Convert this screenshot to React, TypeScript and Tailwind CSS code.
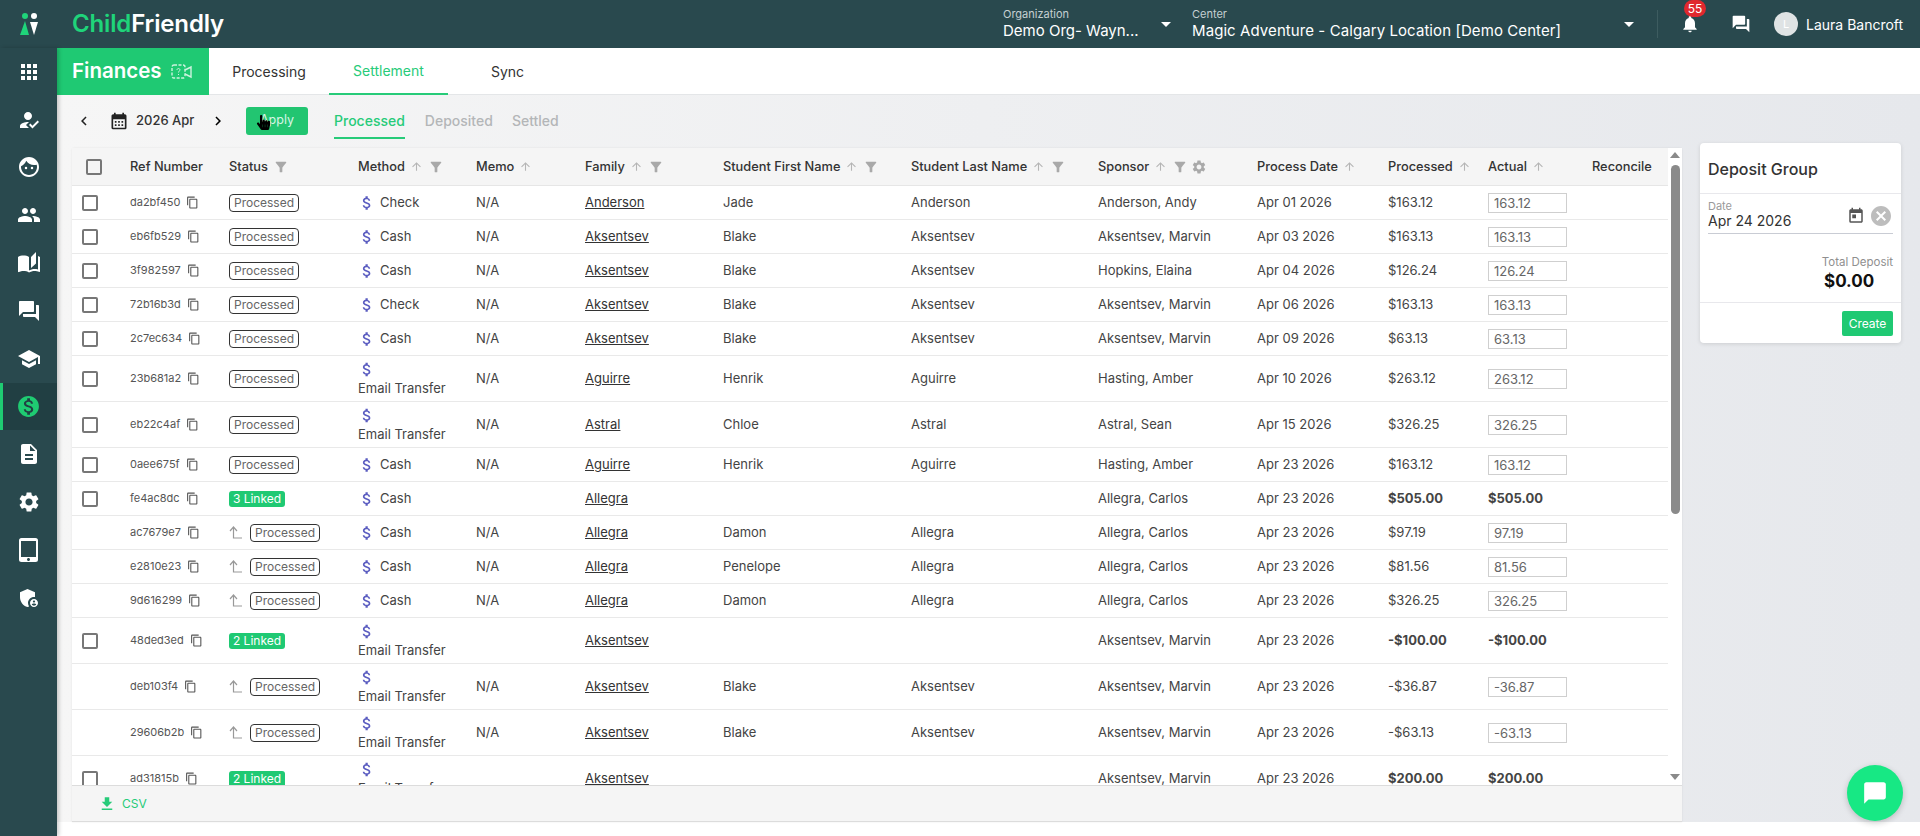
import {
  MdApps, MdHowToReg, MdFace, MdPeople, MdAutoStories, MdForum, MdSchool, MdMonetizationOn, MdDescription, MdSettings,
  MdTabletMac, MdAdminPanelSettings, MdOutlineContentCopy, MdFilterAlt, MdArrowUpward, MdAttachMoney, MdToday, MdCancel,
  MdFileDownload, MdChatBubble, MdNotifications, MdArrowDropDown, MdChevronLeft, MdChevronRight, MdCalendarMonth,
} from 'react-icons/md';
import { FaHandPointer } from 'react-icons/fa';

type Row = {
  ref: string;
  status: string;
  sub?: boolean;
  method: string;
  memo?: string;
  family: string;
  first?: string;
  last?: string;
  sponsor: string;
  date: string;
  processed: string;
  actual: string;
  bold?: boolean;
};

const rows: Row[] = [
  { ref: 'da2bf450', status: 'Processed', method: 'Check', memo: 'N/A', family: 'Anderson', first: 'Jade', last: 'Anderson', sponsor: 'Anderson, Andy', date: 'Apr 01 2026', processed: '$163.12', actual: '163.12' },
  { ref: 'eb6fb529', status: 'Processed', method: 'Cash', memo: 'N/A', family: 'Aksentsev', first: 'Blake', last: 'Aksentsev', sponsor: 'Aksentsev, Marvin', date: 'Apr 03 2026', processed: '$163.13', actual: '163.13' },
  { ref: '3f982597', status: 'Processed', method: 'Cash', memo: 'N/A', family: 'Aksentsev', first: 'Blake', last: 'Aksentsev', sponsor: 'Hopkins, Elaina', date: 'Apr 04 2026', processed: '$126.24', actual: '126.24' },
  { ref: '72b16b3d', status: 'Processed', method: 'Check', memo: 'N/A', family: 'Aksentsev', first: 'Blake', last: 'Aksentsev', sponsor: 'Aksentsev, Marvin', date: 'Apr 06 2026', processed: '$163.13', actual: '163.13' },
  { ref: '2c7ec634', status: 'Processed', method: 'Cash', memo: 'N/A', family: 'Aksentsev', first: 'Blake', last: 'Aksentsev', sponsor: 'Aksentsev, Marvin', date: 'Apr 09 2026', processed: '$63.13', actual: '63.13' },
  { ref: '23b681a2', status: 'Processed', method: 'Email Transfer', memo: 'N/A', family: 'Aguirre', first: 'Henrik', last: 'Aguirre', sponsor: 'Hasting, Amber', date: 'Apr 10 2026', processed: '$263.12', actual: '263.12' },
  { ref: 'eb22c4af', status: 'Processed', method: 'Email Transfer', memo: 'N/A', family: 'Astral', first: 'Chloe', last: 'Astral', sponsor: 'Astral, Sean', date: 'Apr 15 2026', processed: '$326.25', actual: '326.25' },
  { ref: '0aee675f', status: 'Processed', method: 'Cash', memo: 'N/A', family: 'Aguirre', first: 'Henrik', last: 'Aguirre', sponsor: 'Hasting, Amber', date: 'Apr 23 2026', processed: '$163.12', actual: '163.12' },
  { ref: 'fe4ac8dc', status: '3 Linked', method: 'Cash', family: 'Allegra', sponsor: 'Allegra, Carlos', date: 'Apr 23 2026', processed: '$505.00', actual: '$505.00', bold: true },
  { ref: 'ac7679e7', status: 'Processed', sub: true, method: 'Cash', memo: 'N/A', family: 'Allegra', first: 'Damon', last: 'Allegra', sponsor: 'Allegra, Carlos', date: 'Apr 23 2026', processed: '$97.19', actual: '97.19' },
  { ref: 'e2810e23', status: 'Processed', sub: true, method: 'Cash', memo: 'N/A', family: 'Allegra', first: 'Penelope', last: 'Allegra', sponsor: 'Allegra, Carlos', date: 'Apr 23 2026', processed: '$81.56', actual: '81.56' },
  { ref: '9d616299', status: 'Processed', sub: true, method: 'Cash', memo: 'N/A', family: 'Allegra', first: 'Damon', last: 'Allegra', sponsor: 'Allegra, Carlos', date: 'Apr 23 2026', processed: '$326.25', actual: '326.25' },
  { ref: '48ded3ed', status: '2 Linked', method: 'Email Transfer', family: 'Aksentsev', sponsor: 'Aksentsev, Marvin', date: 'Apr 23 2026', processed: '-$100.00', actual: '-$100.00', bold: true },
  { ref: 'deb103f4', status: 'Processed', sub: true, method: 'Email Transfer', memo: 'N/A', family: 'Aksentsev', first: 'Blake', last: 'Aksentsev', sponsor: 'Aksentsev, Marvin', date: 'Apr 23 2026', processed: '-$36.87', actual: '-36.87' },
  { ref: '29606b2b', status: 'Processed', sub: true, method: 'Email Transfer', memo: 'N/A', family: 'Aksentsev', first: 'Blake', last: 'Aksentsev', sponsor: 'Aksentsev, Marvin', date: 'Apr 23 2026', processed: '-$63.13', actual: '-63.13' },
  { ref: 'ad31815b', status: '2 Linked', method: 'Email Transfer', family: 'Aksentsev', sponsor: 'Aksentsev, Marvin', date: 'Apr 23 2026', processed: '$200.00', actual: '$200.00', bold: true },
];

const gridCols = 'grid grid-cols-[58px_99px_129px_118px_109px_138px_188px_187px_159px_131px_100px_104px_76px]';

const navIcons = [MdApps, MdHowToReg, MdFace, MdPeople, MdAutoStories, MdForum, MdSchool, MdMonetizationOn, MdDescription, MdSettings, MdTabletMac, MdAdminPanelSettings];

function Sidebar() {
  return (
    <div className="w-[57px] shrink-0 bg-[#29494e] shadow-[2px_0_4px_rgba(0,0,0,0.2)] z-10">
      {navIcons.map((Icon, i) => {
        const active = i === 7;
        return (
          <div key={i} className={`h-[47.8px] flex items-center justify-center border-l-[3px] pr-[3px] ${active ? 'bg-[#213f43] border-[#1fcb72] text-[#1fcb72]' : 'border-transparent text-white'}`}>
            <Icon size={active ? 25 : 24} />
          </div>
        );
      })}
    </div>
  );
}

function TopBar() {
  return (
    <div className="h-12 shrink-0 bg-[#29494e] flex items-center text-white">
      <div className="w-[57px] flex justify-center">
        <svg width="20" height="24" viewBox="0 0 20 24" fill="currentColor">
          <circle cx="6" cy="4" r="3" fill="#1fd47a" />
          <circle cx="15" cy="4" r="3" />
          <path d="M6 9l4 14H1z" fill="#1fd47a" />
          <path d="M11 10h8l-4 13z" />
        </svg>
      </div>
      <div className="ml-[15px] w-[931px] text-[24px] leading-none font-semibold tracking-[-0.15px]">
        <span className="text-[#1fd47a]">Child</span>Friendly
      </div>
      <div className="w-[140px]">
        <div className="text-[11px] leading-[13px] text-[#c5d0d2]">Organization</div>
        <div className="text-[15px] leading-[19px] whitespace-nowrap">Demo Org- Wayn...</div>
      </div>
      <MdArrowDropDown size={24} className="ml-[11px]" />
      <div className="ml-[14px] w-[425px]">
        <div className="text-[11px] leading-[13px] text-[#c5d0d2]">Center</div>
        <div className="text-[15px] leading-[19px] tracking-[0.08px] whitespace-nowrap">Magic Adventure - Calgary Location [Demo Center]</div>
      </div>
      <MdArrowDropDown size={24} />
      <div className="ml-[16px] h-7 border-l border-[#3d5c60]" />
      <div className="relative ml-[22px]">
        <MdNotifications size={20} />
        <div className="absolute -top-[14px] left-[4px] w-[22px] h-[17px] rounded-full bg-[#e0282e] text-[12px] leading-[17px] text-center">55</div>
      </div>
      <MdForum size={20} className="ml-[31px]" />
      <div className="ml-[23px] w-6 h-6 rounded-full bg-[#dfe3e4] text-[11px] leading-6 text-center">L</div>
      <div className="ml-[8px] text-[14px] whitespace-nowrap">Laura Bancroft</div>
    </div>
  );
}

function TabsRow() {
  return (
    <div className="h-[47px] shrink-0 bg-white flex border-b border-[#e4e6e8]">
      <div className="w-[152px] h-[47px] bg-[#1fc973] flex items-center pl-[15px] text-white">
        <span className="text-[20.5px] font-semibold">Finances</span>
        <svg width="21" height="20" viewBox="0 0 21 20" fill="none" stroke="#cdf2de" strokeWidth="1.4" className="ml-[9px]">
          <rect x="1" y="3" width="13" height="13" rx="2" strokeDasharray="3 1.5" />
          <path d="M14 8l6-3v10l-6-3" />
          <path d="M6 8c0-2 3-2 3 0 0 1-1.500 1-1.500 2.500M7.500 12v1" strokeWidth="1" />
        </svg>
      </div>
      <div className="w-[120px] flex items-center justify-center text-[14px] text-[#333]">Processing</div>
      <div className="w-[119px] flex items-center justify-center text-[14px] text-[#27cb79] border-b-2 border-[#27cb79] h-[47px]">Settlement</div>
      <div className="w-[119px] flex items-center justify-center text-[14px] text-[#333]">Sync</div>
    </div>
  );
}

function Toolbar() {
  return (
    <div className="h-[51px] mb-[2px] shrink-0 flex items-center pl-[18px] relative">
      <MdChevronLeft size={18} className="text-[#222]" />
      <MdCalendarMonth size={20} className="ml-[16px] text-[#222]" />
      <span className="ml-[7px] w-[73px] text-[13px] font-medium text-[#333]">2026 Apr</span>
      <MdChevronRight size={18} />
      <div className="ml-[19px] w-[62px] h-[28px] rounded-[3px] bg-[#22c571] text-[#d8f5e6] text-[12.500px] flex items-center justify-center">Apply</div>
      <div className="relative ml-[26px] h-[36px] flex items-center text-[14px] font-medium text-[#27cb79]">
        Processed
        <div className="absolute left-0 right-0 bottom-0 h-[2px] bg-[#27cb79]" />
      </div>
      <span className="ml-[20px] text-[14px] font-medium text-[#b4b6b8]">Deposited</span>
      <span className="ml-[19px] text-[14px] font-medium text-[#b4b6b8]">Settled</span>
      <FaHandPointer size={15} className="absolute left-[199px] top-[20px] text-black" />
    </div>
  );
}

function SortIcon() {
  return <MdArrowUpward size={13} className="text-[#b5b5b5] ml-[5px]" />;
}

function FilterIcon() {
  return <MdFilterAlt size={16} className="text-[#a9a9a9] ml-[5px]" />;
}

function TableHeader() {
  const head = 'flex items-center whitespace-nowrap';
  return (
    <div className={`${gridCols} h-[38px] bg-[#f5f5f5] border-b border-[#e6e6e6] text-[12.800px] font-medium text-[#333]`}>
      <div className={`${head} pl-[14px]`}>
        <div className="w-4 h-4 border-2 border-[#777] rounded-[2px]" />
      </div>
      <div className={head}>Ref Number</div>
      <div className={head}>Status<FilterIcon /></div>
      <div className={head}>Method<SortIcon /><FilterIcon /></div>
      <div className={head}>Memo<SortIcon /></div>
      <div className={head}>Family<SortIcon /><FilterIcon /></div>
      <div className={head}>Student First Name<SortIcon /><FilterIcon /></div>
      <div className={head}>Student Last Name<SortIcon /><FilterIcon /></div>
      <div className={head}>Sponsor<SortIcon /><FilterIcon /><MdSettings size={16} className="text-[#a9a9a9] ml-[3px]" /></div>
      <div className={head}>Process Date<SortIcon /></div>
      <div className={head}>Processed<SortIcon /></div>
      <div className={head}>Actual<SortIcon /></div>
      <div className={head}>Reconcile</div>
    </div>
  );
}

function SubArrow() {
  return (
    <svg width="14" height="14" viewBox="0 0 14 14" fill="none" stroke="#999" strokeWidth="1.2" className="shrink-0 mr-[7px]">
      <path d="M1 5l3.500-4L8 5M4.500 1v11H13" />
    </svg>
  );
}

function StatusCell({ row }: { row: Row }) {
  if (row.status !== 'Processed') {
    return <div className="w-[56px] h-4 rounded-[3px] bg-[#1fc973] text-white text-[12px] leading-4 text-center whitespace-nowrap">{row.status}</div>;
  }
  return (
    <>
      {row.sub && <SubArrow />}
      <div className="w-[70px] h-[18px] rounded-[4px] border border-[#333] text-[#666] text-[12px] leading-4 text-center">Processed</div>
    </>
  );
}

function MethodCell({ method }: { method: string }) {
  if (method === 'Email Transfer') {
    return (
      <div className="flex flex-col items-start text-[#444]">
        <MdAttachMoney size={18} className="text-[#5a5cc0] h-[19px]" />
        <span className="leading-[19px]">{method}</span>
      </div>
    );
  }
  return (
    <div className="flex items-center text-[#444]">
      <MdAttachMoney size={18} className="text-[#5a5cc0] mr-[4px]" />
      {method}
    </div>
  );
}

function TableRow({ row }: { row: Row }) {
  const two = row.method === 'Email Transfer';
  const cell = 'flex items-center whitespace-nowrap text-[#444]';
  return (
    <div className={`${gridCols} ${two ? 'h-[46px]' : 'h-[34px]'} shrink-0 border-b border-[#e9e9e9] bg-white text-[13px]`}>
      <div className={`${cell} pl-[10px]`}>
        {!row.sub && <div className="w-4 h-4 border-2 border-[#777] rounded-[2px]" />}
      </div>
      <div className={`${cell} text-[11px] text-[#555]`}>
        {row.ref}
        <MdOutlineContentCopy size={13} className="ml-[6px] text-[#555]" />
      </div>
      <div className={cell}><StatusCell row={row} /></div>
      <div className={cell}><MethodCell method={row.method} /></div>
      <div className={cell}>{row.memo}</div>
      <div className={cell}><span className="underline text-[#333]">{row.family}</span></div>
      <div className={cell}>{row.first}</div>
      <div className={cell}>{row.last}</div>
      <div className={cell}>{row.sponsor}</div>
      <div className={cell}>{row.date}</div>
      <div className={`${cell} ${row.bold ? 'font-bold text-[#222]' : ''}`}>{row.processed}</div>
      <div className={`${cell} ${row.bold ? 'font-bold text-[#222]' : ''}`}>
        {row.bold ? row.actual : (
          <input readOnly value={row.actual} className="w-[79px] h-5 border border-[#cfcfcf] pl-[5px] text-[13px] text-[#666] outline-none" />
        )}
      </div>
      <div />
    </div>
  );
}

function Scrollbar() {
  return (
    <div className="w-[14px] shrink-0 bg-white flex flex-col items-center">
      <div className="mt-[4px] w-0 h-0 border-l-[5px] border-r-[5px] border-b-[6px] border-l-transparent border-r-transparent border-b-[#8a8a8a]" />
      <div className="mt-[7px] w-[9px] h-[349px] rounded-full bg-[#8a8a8a]" />
      <div className="mt-auto mb-[5px] w-0 h-0 border-l-[5px] border-r-[5px] border-t-[6px] border-l-transparent border-r-transparent border-t-[#8a8a8a]" />
    </div>
  );
}

function DepositCard() {
  return (
    <div className="mt-[-5px] w-[201px] h-[200px] rounded-[4px] bg-white shadow-[0_1px_4px_rgba(0,0,0,0.12)] flex flex-col text-[#333]">
      <div className="h-[51px] shrink-0 flex items-center px-2 pt-[1px] border-b border-[#e8e8ec] text-[16px] font-medium">Deposit Group</div>
      <div className="mx-2 h-[40px] shrink-0 border-b border-[#c9ccd4] flex items-end pb-[4px]">
        <div className="flex-1">
          <div className="text-[11px] leading-[12px] text-[#9a9a9a]">Date</div>
          <div className="text-[14px] leading-[17px]">Apr 24 2026</div>
        </div>
        <MdToday size={18} className="text-[#555] mb-[4px]" />
        <MdCancel size={24} className="text-[#bdbdbd] ml-[4px] mb-[1px]" />
      </div>
      <div className="mx-2 flex-1 flex flex-col items-end justify-center pt-[12px]">
        <div className="text-[11.500px] leading-[14px] text-[#8f8f8f]">Total Deposit</div>
        <div className="w-[69px] text-[17px] leading-[24px] font-bold text-[#111]">$0.00</div>
      </div>
      <div className="h-[41px] shrink-0 border-t border-[#e8e8ec] flex items-center justify-end pr-2">
        <div className="w-[51px] h-[25px] rounded-[2px] bg-[#1fc973] text-white text-[12px] leading-[25px] text-center">Create</div>
      </div>
    </div>
  );
}

export default function App() {
  return (
    <div className="relative w-[1920px] h-[836px] overflow-hidden bg-white flex flex-col font-['Inter',sans-serif]">
      <TopBar />
      <div className="flex flex-1 min-h-0">
        <Sidebar />
        <div className="flex-1 min-w-0 flex flex-col">
          <TabsRow />
          <div className="h-[727px] shrink-0 flex flex-col bg-gradient-to-r from-[#f6f6f6] to-[#e6e8ec]">
            <Toolbar />
            <div className="flex flex-1 min-h-0 pl-[15px]">
              <div className="w-[1610px] shrink-0 flex flex-col rounded-t-[3px] border-b border-[#dcdcdc] bg-[#f5f5f5] shadow-[0_0_2px_rgba(0,0,0,0.1)]">
                <div className="flex h-[638px] shrink-0 overflow-hidden border-b border-[#dcdcdc]">
                  <div className="w-[1596px] shrink-0 flex flex-col">
                    <TableHeader />
                    <div className="flex-1 min-h-0 overflow-hidden flex flex-col bg-white">
                      {rows.map(row => <TableRow key={row.ref} row={row} />)}
                    </div>
                  </div>
                  <Scrollbar />
                </div>
                <div className="flex-1 flex items-center pl-[26px] pt-[1px] text-[#27cb79] text-[12px]">
                  <MdFileDownload size={18} />
                  <span className="ml-[6px]">CSV</span>
                </div>
              </div>
              <div className="ml-[18px]">
                <DepositCard />
              </div>
            </div>
          </div>
        </div>
      </div>
      <div className="absolute left-[1847px] top-[765px] w-14 h-14 rounded-full bg-[#17e884] shadow-[0_2px_6px_rgba(0,0,0,0.2)] flex items-center justify-center text-white">
        <MdChatBubble size={26} />
      </div>
    </div>
  );
}
